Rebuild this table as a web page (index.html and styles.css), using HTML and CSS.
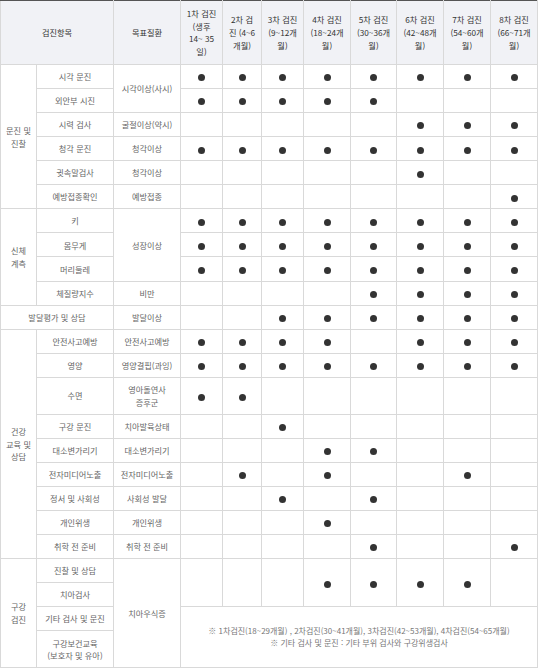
FILE: index.html
```html
<!DOCTYPE html>
<html lang="ko">
<head>
<meta charset="utf-8">
<title>영유아 건강검진 항목</title>
<link rel="stylesheet" href="styles.css">
</head>
<body>
<table class="chart">
  <colgroup>
    <col class="w-cat"><col class="w-item"><col class="w-dis">
    <col class="w-42"><col class="w-39"><col class="w-42"><col class="w-47"><col class="w-46"><col class="w-47"><col class="w-47"><col class="w-47">
  </colgroup>
  <thead>
    <tr>
      <th colspan="2">검진항목</th>
      <th>목표질환</th>
      <th>1차 검진<br>(생후<br>14~ 35<br>일)</th>
      <th>2차 검<br>진 (4~6<br>개월)</th>
      <th>3차 검진<br>(9~12개<br>월)</th>
      <th>4차 검진<br>(18~24개<br>월)</th>
      <th>5차 검진<br>(30~36개<br>월)</th>
      <th>6차 검진<br>(42~48개<br>월)</th>
      <th>7차 검진<br>(54~60개<br>월)</th>
      <th>8차 검진<br>(66~71개<br>월)</th>
    </tr>
  </thead>
  <tbody>
    <tr>
      <td rowspan="6">문진 및 진찰</td>
      <td>시각 문진</td>
      <td rowspan="2">시각이상(사시)</td>
      <td><span class="dot"></span></td><td><span class="dot"></span></td><td><span class="dot"></span></td><td><span class="dot"></span></td><td><span class="dot"></span></td><td><span class="dot"></span></td><td><span class="dot"></span></td><td><span class="dot"></span></td>
    </tr>
    <tr>
      <td>외안부 시진</td>
      <td><span class="dot"></span></td><td><span class="dot"></span></td><td><span class="dot"></span></td><td><span class="dot"></span></td><td><span class="dot"></span></td><td></td><td></td><td></td>
    </tr>
    <tr>
      <td>시력 검사</td>
      <td>굴절이상(약시)</td>
      <td></td><td></td><td></td><td></td><td></td><td><span class="dot"></span></td><td><span class="dot"></span></td><td><span class="dot"></span></td>
    </tr>
    <tr>
      <td>청각 문진</td>
      <td>청각이상</td>
      <td><span class="dot"></span></td><td><span class="dot"></span></td><td><span class="dot"></span></td><td><span class="dot"></span></td><td><span class="dot"></span></td><td><span class="dot"></span></td><td><span class="dot"></span></td><td><span class="dot"></span></td>
    </tr>
    <tr>
      <td>귓속말검사</td>
      <td>청각이상</td>
      <td></td><td></td><td></td><td></td><td></td><td><span class="dot"></span></td><td></td><td></td>
    </tr>
    <tr>
      <td>예방접종확인</td>
      <td>예방접종</td>
      <td></td><td></td><td></td><td></td><td></td><td></td><td></td><td><span class="dot"></span></td>
    </tr>
    <tr>
      <td rowspan="4">신체 계측</td>
      <td>키</td>
      <td rowspan="3">성장이상</td>
      <td><span class="dot"></span></td><td><span class="dot"></span></td><td><span class="dot"></span></td><td><span class="dot"></span></td><td><span class="dot"></span></td><td><span class="dot"></span></td><td><span class="dot"></span></td><td><span class="dot"></span></td>
    </tr>
    <tr>
      <td>몸무게</td>
      <td><span class="dot"></span></td><td><span class="dot"></span></td><td><span class="dot"></span></td><td><span class="dot"></span></td><td><span class="dot"></span></td><td><span class="dot"></span></td><td><span class="dot"></span></td><td><span class="dot"></span></td>
    </tr>
    <tr>
      <td>머리둘레</td>
      <td><span class="dot"></span></td><td><span class="dot"></span></td><td><span class="dot"></span></td><td><span class="dot"></span></td><td><span class="dot"></span></td><td><span class="dot"></span></td><td><span class="dot"></span></td><td><span class="dot"></span></td>
    </tr>
    <tr>
      <td>체질량지수</td>
      <td>비만</td>
      <td></td><td></td><td></td><td></td><td><span class="dot"></span></td><td><span class="dot"></span></td><td><span class="dot"></span></td><td><span class="dot"></span></td>
    </tr>
    <tr>
      <td colspan="2">발달평가 및 상담</td>
      <td>발달이상</td>
      <td></td><td></td><td><span class="dot"></span></td><td><span class="dot"></span></td><td><span class="dot"></span></td><td><span class="dot"></span></td><td><span class="dot"></span></td><td><span class="dot"></span></td>
    </tr>
    <tr>
      <td rowspan="9">건강 교육 및 상담</td>
      <td>안전사고예방</td>
      <td>안전사고예방</td>
      <td><span class="dot"></span></td><td><span class="dot"></span></td><td><span class="dot"></span></td><td><span class="dot"></span></td><td></td><td><span class="dot"></span></td><td><span class="dot"></span></td><td><span class="dot"></span></td>
    </tr>
    <tr>
      <td>영양</td>
      <td>영양결핍(과잉)</td>
      <td><span class="dot"></span></td><td><span class="dot"></span></td><td><span class="dot"></span></td><td><span class="dot"></span></td><td><span class="dot"></span></td><td><span class="dot"></span></td><td><span class="dot"></span></td><td><span class="dot"></span></td>
    </tr>
    <tr>
      <td>수면</td>
      <td>영아돌연사 증후군</td>
      <td><span class="dot"></span></td><td><span class="dot"></span></td><td></td><td></td><td></td><td></td><td></td><td></td>
    </tr>
    <tr>
      <td>구강 문진</td>
      <td>치아발육상태</td>
      <td></td><td></td><td><span class="dot"></span></td><td></td><td></td><td></td><td></td><td></td>
    </tr>
    <tr>
      <td>대소변가리기</td>
      <td>대소변가리기</td>
      <td></td><td></td><td></td><td><span class="dot"></span></td><td><span class="dot"></span></td><td></td><td></td><td></td>
    </tr>
    <tr>
      <td>전자미디어노출</td>
      <td>전자미디어노출</td>
      <td></td><td><span class="dot"></span></td><td></td><td><span class="dot"></span></td><td></td><td></td><td><span class="dot"></span></td><td></td>
    </tr>
    <tr>
      <td>정서 및 사회성</td>
      <td>사회성 발달</td>
      <td></td><td></td><td><span class="dot"></span></td><td></td><td><span class="dot"></span></td><td></td><td></td><td></td>
    </tr>
    <tr>
      <td>개인위생</td>
      <td>개인위생</td>
      <td></td><td></td><td></td><td><span class="dot"></span></td><td></td><td></td><td></td><td></td>
    </tr>
    <tr>
      <td>취학 전 준비</td>
      <td>취학 전 준비</td>
      <td></td><td></td><td></td><td></td><td><span class="dot"></span></td><td></td><td></td><td><span class="dot"></span></td>
    </tr>
    <tr>
      <td rowspan="4">구강 검진</td>
      <td>진찰 및 상담</td>
      <td rowspan="4">치아우식증</td>
      <td rowspan="2"></td><td rowspan="2"></td><td rowspan="2"></td><td rowspan="2"><span class="dot"></span></td><td rowspan="2"><span class="dot"></span></td><td rowspan="2"><span class="dot"></span></td><td rowspan="2"><span class="dot"></span></td><td rowspan="2"></td>
    </tr>
    <tr>
      <td>치아검사</td>
    </tr>
    <tr>
      <td>기타 검사 및 문진</td>
      <td colspan="8" rowspan="2" class="note">※ 1차검진(18~29개월) , 2차검진(30~41개월), 3차검진(42~53개월), 4차검진(54~65개월)<br>※ 기타 검사 및 문진 : 기타 부위 검사와 구강위생검사</td>
    </tr>
    <tr>
      <td>구강보건교육 (보호자 및 유아)</td>
    </tr>
  </tbody>
</table>
</body>
</html>
```
FILE: styles.css
```css
body {
  margin: 0;
  background: #ffffff;
}

.chart {
  border-collapse: collapse;
  table-layout: fixed;
  width: 538px;
  font-family: "Noto Sans CJK KR", "Noto Sans", sans-serif;
  font-size: 8.2px;
  line-height: 12.7px;
  color: #666666;
  word-break: keep-all;
}

.w-cat { width: 36px; }
.w-item { width: 77px; }
.w-dis { width: 67px; }
.w-42 { width: 42px; }
.w-39 { width: 39px; }
.w-46 { width: 46px; }
.w-47 { width: 47px; }

.chart th,
.chart td {
  border: 1px solid #d9d9d9;
  padding: 5.2px 2px;
  text-align: center;
  vertical-align: middle;
}

.chart th {
  background: #f1f2f6;
  color: #333333;
  font-weight: normal;
  padding: 6px 2px;
  border-top-color: #555555;
}

.dot {
  display: inline-block;
  width: 7px;
  height: 7px;
  border-radius: 50%;
  background: #333333;
  vertical-align: middle;
}

.chart .note {
  font-size: 8px;
  line-height: 12.3px;
  color: #777777;
}
```
